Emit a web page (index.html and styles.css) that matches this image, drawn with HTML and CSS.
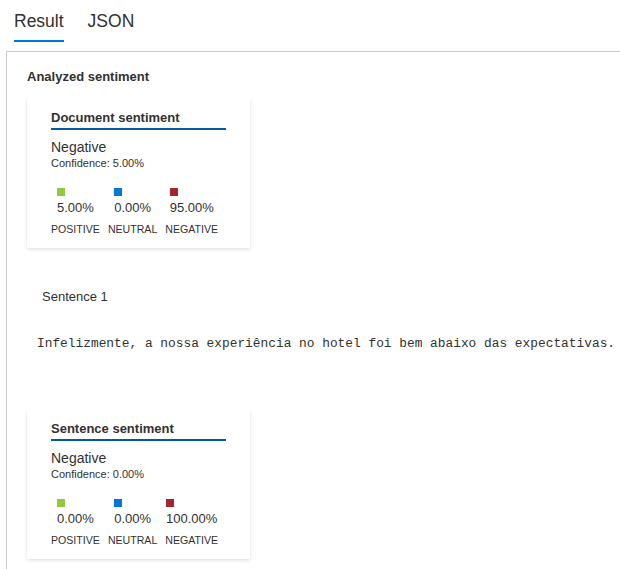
FILE: index.html
```html
<!DOCTYPE html>
<html lang="pt">
<head>
<meta charset="utf-8">
<title>Result</title>
<link rel="stylesheet" href="styles.css">
</head>
<body>
<div class="tabs">
  <div class="tab active">Result</div>
  <div class="tab">JSON</div>
</div>
<div class="panel">
  <div class="heading">Analyzed sentiment</div>

  <div class="card">
    <div class="card-title">Document sentiment</div>
    <div class="label-big">Negative</div>
    <div class="confidence">Confidence: 5.00%</div>
    <div class="stats">
      <div class="stat">
        <div class="stat-top"><span class="sq sq-pos"></span><span class="val">5.00%</span></div>
        <div class="stat-label">POSITIVE</div>
      </div>
      <div class="stat">
        <div class="stat-top"><span class="sq sq-neu"></span><span class="val">0.00%</span></div>
        <div class="stat-label">NEUTRAL</div>
      </div>
      <div class="stat">
        <div class="stat-top"><span class="sq sq-neg"></span><span class="val">95.00%</span></div>
        <div class="stat-label">NEGATIVE</div>
      </div>
    </div>
  </div>

  <div class="sentence-title">Sentence 1</div>
  <pre class="sentence-text">Infelizmente, a nossa experiência no hotel foi bem abaixo das expectativas.</pre>

  <div class="card card-sentence">
    <div class="card-title">Sentence sentiment</div>
    <div class="label-big">Negative</div>
    <div class="confidence">Confidence: 0.00%</div>
    <div class="stats">
      <div class="stat">
        <div class="stat-top"><span class="sq sq-pos"></span><span class="val">0.00%</span></div>
        <div class="stat-label">POSITIVE</div>
      </div>
      <div class="stat">
        <div class="stat-top"><span class="sq sq-neu"></span><span class="val">0.00%</span></div>
        <div class="stat-label">NEUTRAL</div>
      </div>
      <div class="stat">
        <div class="stat-top"><span class="sq sq-neg"></span><span class="val">100.00%</span></div>
        <div class="stat-label">NEGATIVE</div>
      </div>
    </div>
  </div>
</div>
</body>
</html>
```
FILE: styles.css
```css
html, body {
  margin: 0;
  padding: 0;
  background: #ffffff;
}
body {
  font-family: "Segoe UI", "Liberation Sans", Arial, sans-serif;
  color: #323130;
  overflow: hidden;
}
.tabs {
  display: flex;
  gap: 24px;
  padding: 9px 0 0 14px;
  height: 42px;
  box-sizing: content-box;
}
.tab {
  font-size: 17.5px;
  line-height: 24px;
  height: 33px;
  box-sizing: border-box;
  color: #323130;
}
.tab.active {
  border-bottom: 2px solid #0078d4;
}
.panel {
  margin-left: 6px;
  border-top: 1px solid #c8c8c8;
  border-left: 1px solid #c8c8c8;
  padding: 16px 0 8px 20px;
  min-height: 518px;
  box-sizing: border-box;
}
.heading {
  font-size: 13px;
  font-weight: 700;
  line-height: 18px;
}
.card {
  width: 175px;
  padding: 12px 24px 12px 24px;
  margin-top: 11px;
  background: #fff;
  box-shadow: 0 1.6px 3.6px rgba(0,0,0,0.13), 0 0.3px 0.9px rgba(0,0,0,0.11);
}
.card-title {
  font-size: 13px;
  font-weight: 700;
  line-height: 18px;
  padding-bottom: 1px;
  border-bottom: 2px solid #005a9e;
}
.label-big {
  font-size: 14px;
  line-height: 18px;
  margin-top: 8px;
}
.confidence {
  font-size: 11px;
  line-height: 14px;
}
.stats {
  display: flex;
  gap: 8px;
  margin-top: 18px;
}
.stat {
  display: flex;
  flex-direction: column;
  align-items: center;
}
.stat-top {
  display: flex;
  flex-direction: column;
  align-items: flex-start;
}
.sq {
  display: block;
  width: 8px;
  height: 8px;
}
.sq-pos { background: #92c83e; }
.sq-neu { background: #0078d4; }
.sq-neg { background: #a4262c; }
.val {
  font-size: 13px;
  line-height: 18px;
  margin-top: 3px;
}
.stat-label {
  font-size: 10.6px;
  line-height: 14px;
  margin-top: 5px;
}
.sentence-title {
  font-size: 13px;
  line-height: 18px;
  margin: 40px 0 0 15px;
}
.sentence-text {
  font-family: "Liberation Mono", "DejaVu Sans Mono", monospace;
  font-size: 12.85px;
  line-height: 16px;
  margin: 30px 0 0 10px;
  color: #323130;
}
.card-sentence {
  margin-top: 56px;
}
```
